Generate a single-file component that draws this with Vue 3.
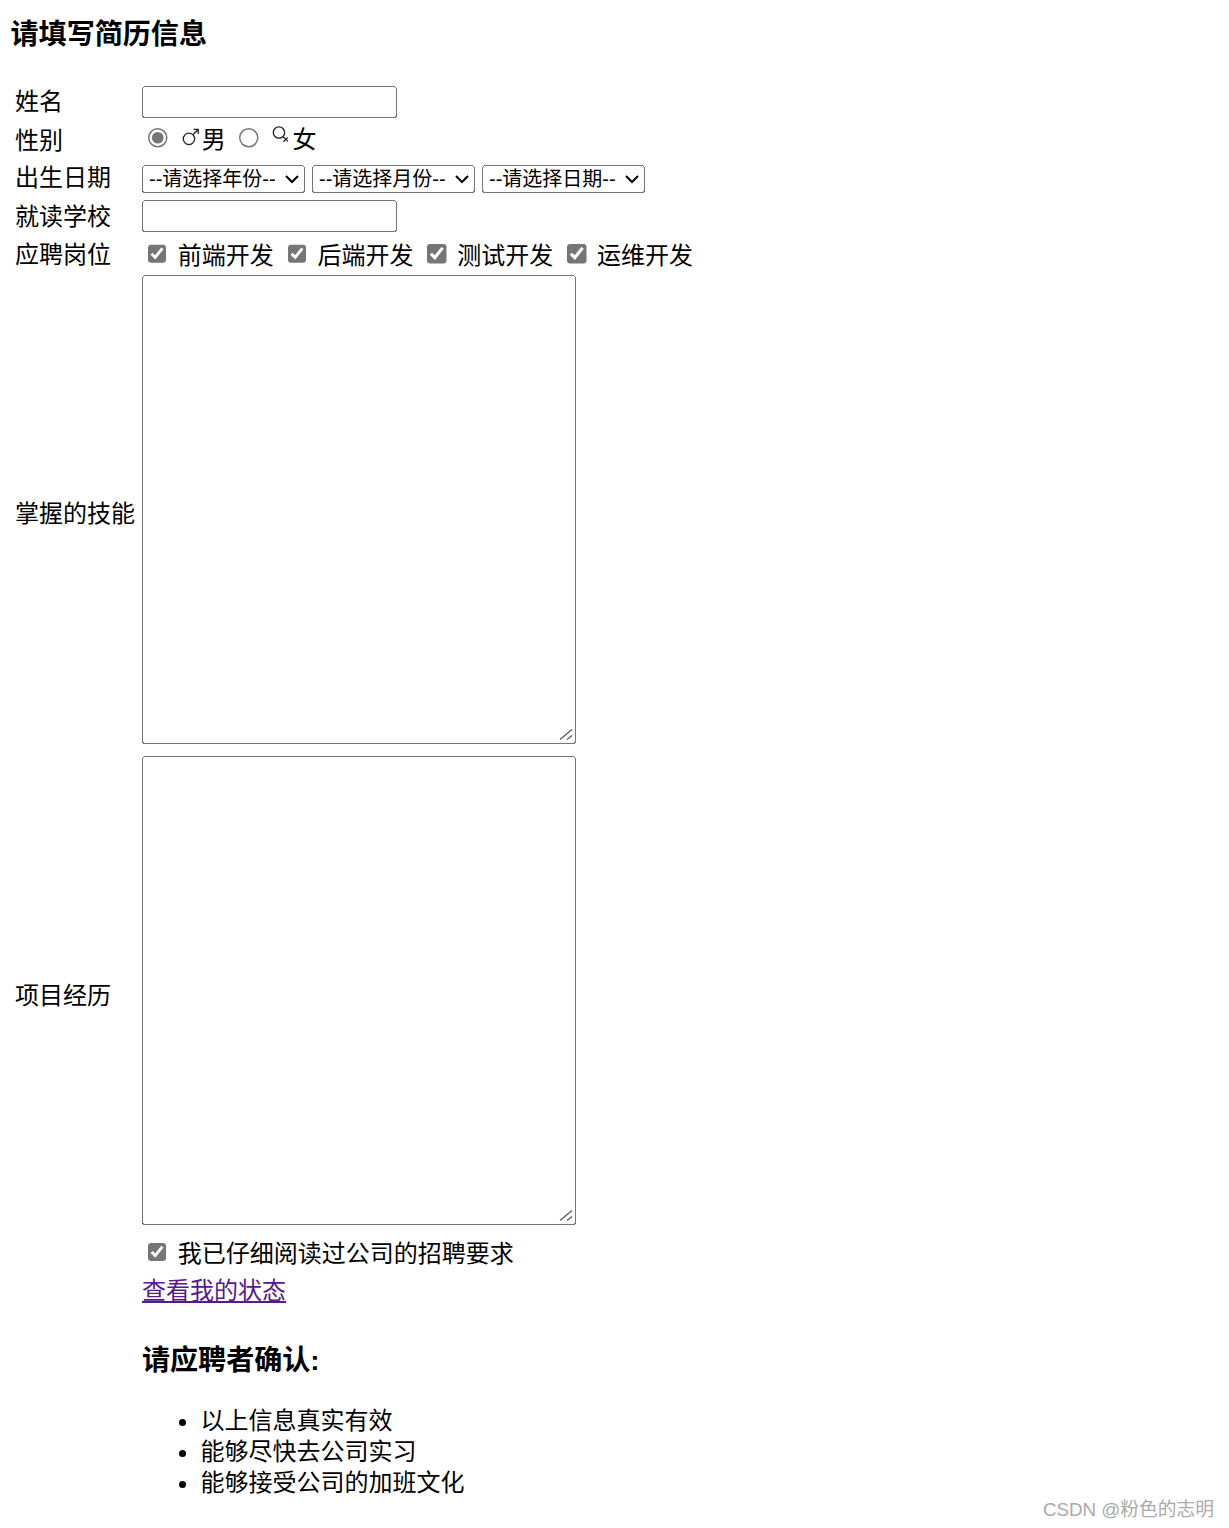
<script setup>
const jobs = ['前端开发', '后端开发', '测试开发', '运维开发']
const selects = ['--请选择年份--', '--请选择月份--', '--请选择日期--']
const rules = ['以上信息真实有效', '能够尽快去公司实习', '能够接受公司的加班文化']
</script>

<template>
  <div class="page">
    <h3>请填写简历信息</h3>
    <table>
      <tbody>
        <tr>
          <td>姓名</td>
          <td><input type="text" /></td>
        </tr>
        <tr class="sex-row">
          <td>性别</td>
          <td>
            <input type="radio" name="sex" checked />
            <svg class="sex" viewBox="0 0 12 12" width="13" height="13">
              <circle cx="4.9" cy="7.3" r="3.5" fill="none" stroke="#222" stroke-width="0.8" />
              <path d="M7.4 4.8 10.6 1.4M7.7 1.4h2.9v2.9" fill="none" stroke="#222" stroke-width="0.8" />
            </svg>男
            <input type="radio" name="sex" />
            <svg class="sex female" viewBox="0 0 12 12" width="13" height="13">
              <circle cx="4.9" cy="4.6" r="3.5" fill="none" stroke="#222" stroke-width="0.8" />
              <path d="M7.4 7.1 10.4 10.1M7.6 10.4 10.4 7.6" fill="none" stroke="#222" stroke-width="0.8" />
            </svg>女
          </td>
        </tr>
        <tr class="date-row">
          <td>出生日期</td>
          <td>
            <select v-for="item in selects" :key="item">
              <option>{{ item }}</option>
            </select>
          </td>
        </tr>
        <tr>
          <td>就读学校</td>
          <td><input type="text" /></td>
        </tr>
        <tr class="job-row">
          <td>应聘岗位</td>
          <td>
            <label v-for="job in jobs" :key="job" class="job">
              <input type="checkbox" checked />
              {{ job }}
            </label>
          </td>
        </tr>
        <tr class="skill-row">
          <td>掌握的技能</td>
          <td>
            <span class="area">
              <textarea></textarea>
              <svg class="grip" viewBox="0 0 15 15" width="10" height="10">
                <path d="M1 11.5 13 1.5M8 11.5 13 7.5" fill="none" stroke="#555" stroke-width="1.2" />
              </svg>
            </span>
          </td>
        </tr>
        <tr>
          <td>项目经历</td>
          <td>
            <span class="area">
              <textarea></textarea>
              <svg class="grip" viewBox="0 0 15 15" width="10" height="10">
                <path d="M1 11.5 13 1.5M8 11.5 13 7.5" fill="none" stroke="#555" stroke-width="1.2" />
              </svg>
            </span>
          </td>
        </tr>
        <tr>
          <td></td>
          <td><input type="checkbox" checked /> 我已仔细阅读过公司的招聘要求</td>
        </tr>
        <tr>
          <td></td>
          <td><a href="#">查看我的状态</a></td>
        </tr>
        <tr>
          <td></td>
          <td>
            <h3>请应聘者确认:</h3>
            <ul>
              <li v-for="rule in rules" :key="rule">{{ rule }}</li>
            </ul>
          </td>
        </tr>
      </tbody>
    </table>
    <span class="mark">CSDN @粉色的志明</span>
  </div>
</template>

<style scoped>
/* the reference is a plain form at 150% browser zoom */
.page {
  zoom: 1.5;
  padding: 11px 8px 0 7.67px;
  font-family: "Liberation Sans", "Noto Sans CJK SC", sans-serif;
  line-height: 20.67px;
  color: #000;
}

h3 {
  margin: 0;
  font-size: 18.72px;
  font-weight: 700;
  line-height: 24px;
}

.page > h3 {
  margin: 0 0 18px -0.67px;
}

td h3 {
  margin: 20.67px 0 17.03px;
}

td:first-child {
  padding: 1.33px 1.67px 0 0.33px;
}

.sex-row td:last-child {
  padding-top: 1.33px;
}

.date-row td:last-child {
  padding-bottom: 0.33px;
}

.job-row td:last-child {
  padding: 2.33px 1px 0;
}

.skill-row td:last-child {
  padding-bottom: 0.33px;
}

select,
input[type="text"],
textarea {
  font-family: "Liberation Sans", "Noto Sans CJK SC", sans-serif;
}

input[type="text"] {
  width: 170px;
  box-sizing: border-box;
}

select {
  width: 108.67px;
  height: 18.67px;
  margin-right: 4.67px;
  vertical-align: -1px;
}

input[type="checkbox"],
input[type="radio"] {
  accent-color: #767676;
}

input[type="checkbox"] {
  margin-right: 2.33px;
}

input[type="radio"] {
  vertical-align: 0;
  margin-left: 4.33px;
}

.job {
  margin-right: 5.4px;
}

.sex {
  vertical-align: 1px;
  margin: 0 1px 0 5.6px;
}

.sex.female {
  vertical-align: 2px;
}

.area {
  position: relative;
  display: inline-block;
}

textarea {
  display: block;
  width: 289.33px;
  height: 312.67px;
  padding: 2px;
  box-sizing: border-box;
  resize: none;
}

.grip {
  position: absolute;
  right: 1px;
  bottom: 1px;
}

ul {
  margin: 0;
  padding-left: 39px;
}

a {
  color: #551a8b;
}

.mark {
  position: absolute;
  top: 997px;
  right: 10px;
  font-size: 12.5px;
  line-height: 18px;
  color: #aaa;
}
</style>
